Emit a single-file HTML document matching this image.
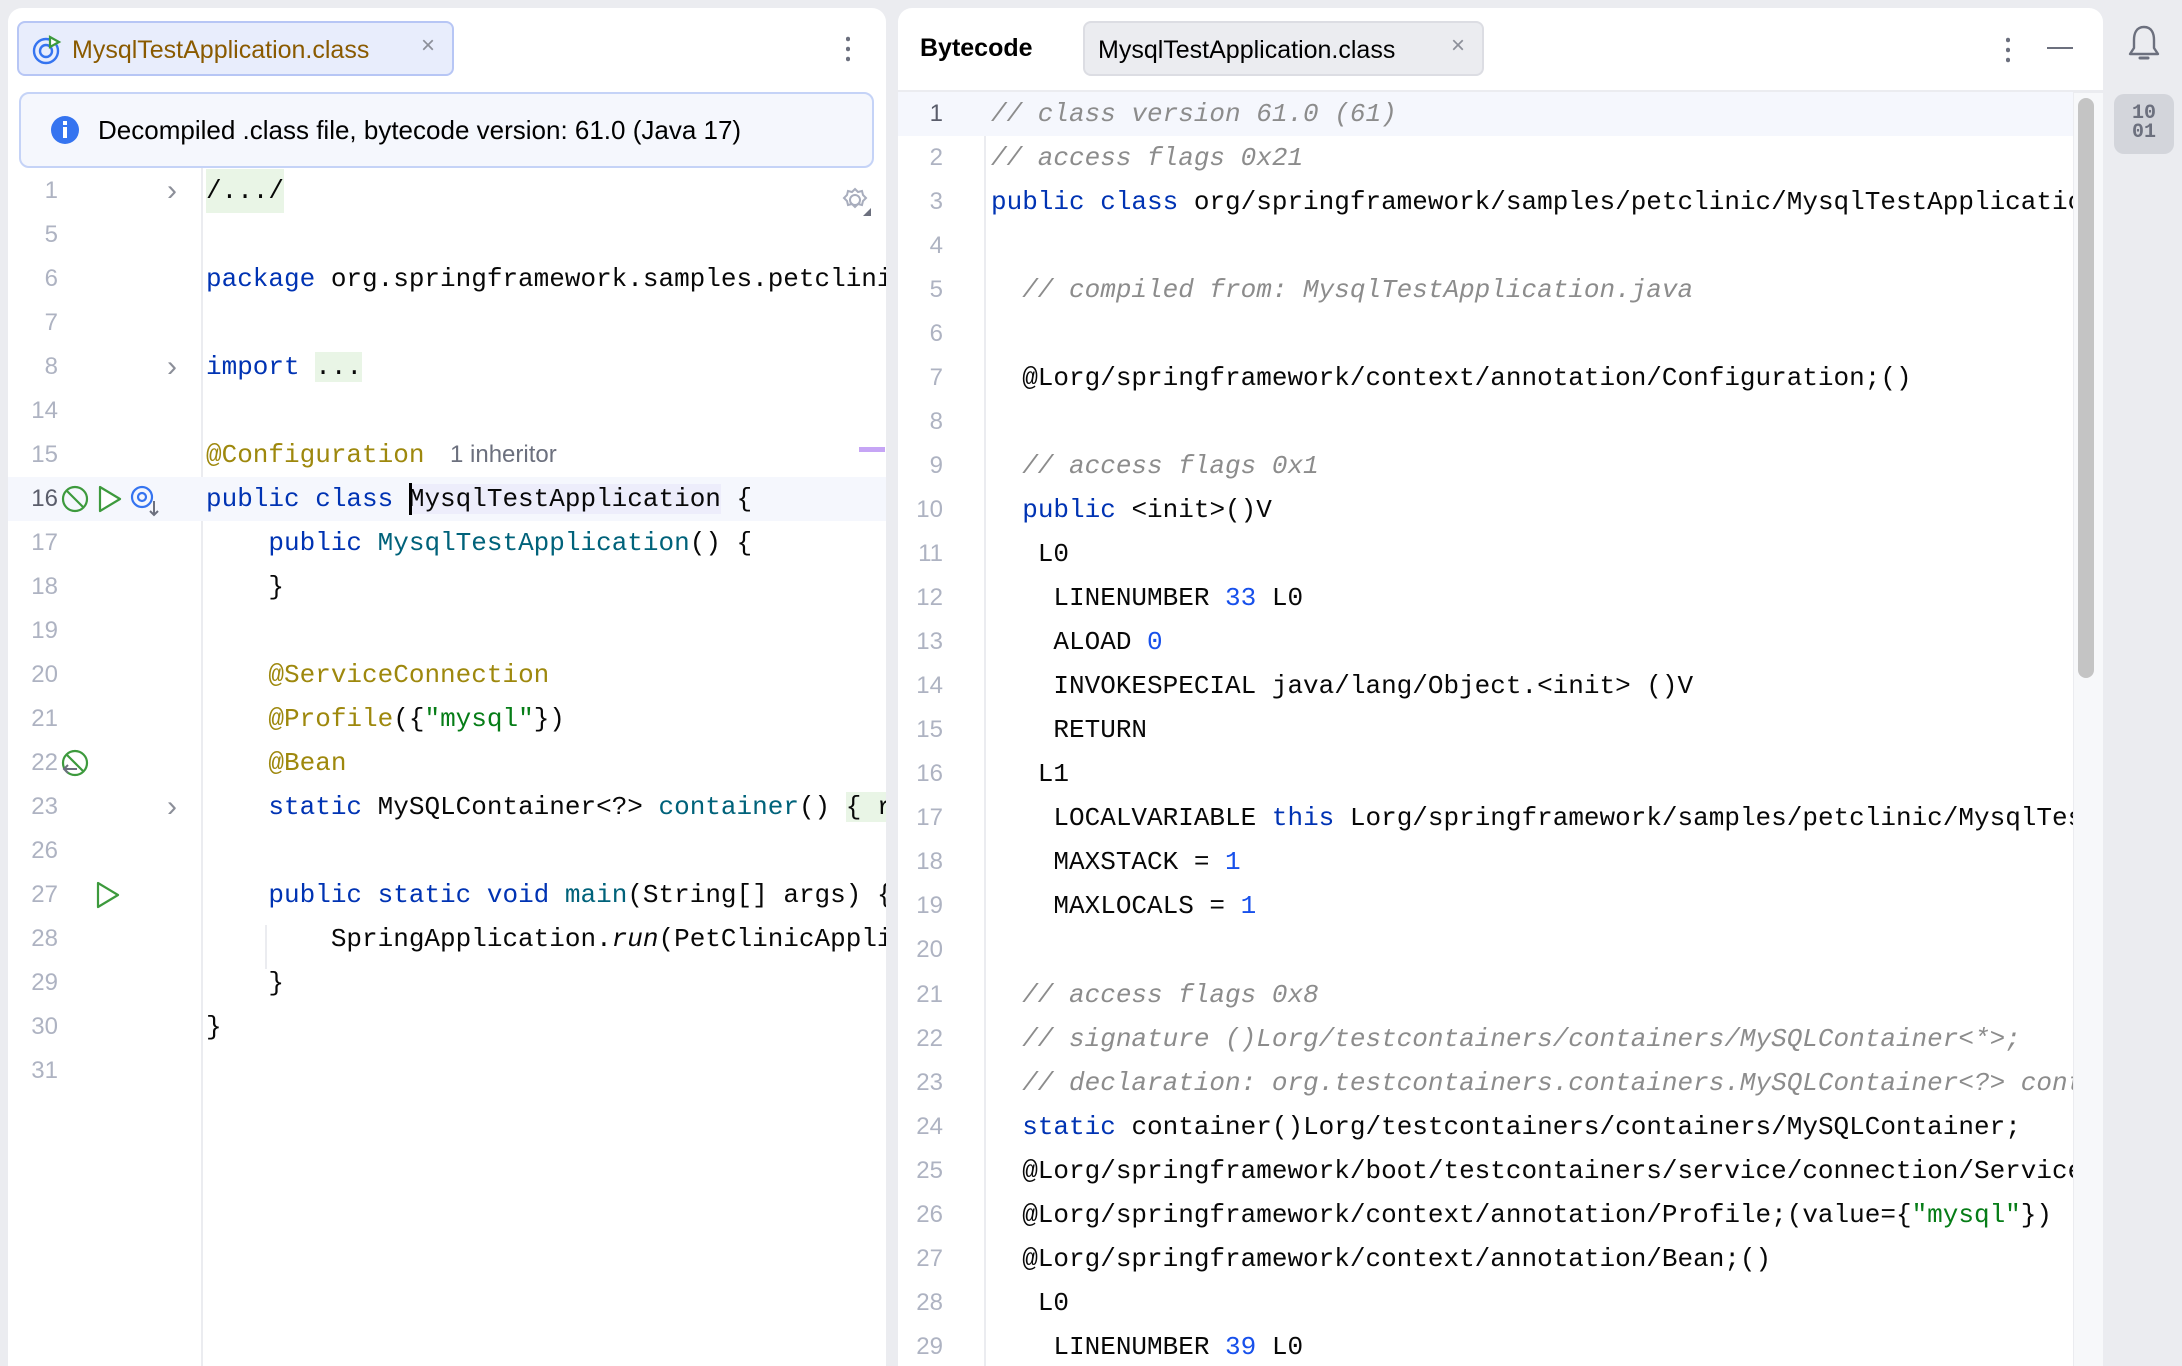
<!DOCTYPE html>
<html><head><meta charset="utf-8"><style>
*{margin:0;padding:0;box-sizing:border-box}
body{width:2182px;height:1366px;background:#ebecf0;position:relative;overflow:hidden;font-family:"Liberation Sans",sans-serif}
.panel{position:absolute;background:#fff;border-radius:14px 14px 0 0;overflow:hidden}
.mono{font-family:"Liberation Mono",monospace;font-size:26px;white-space:pre;color:#080808}
.row{position:absolute;left:0;right:0;height:44px;line-height:44px}
.row>*{position:absolute;top:0}
.ln{text-align:right;color:#aeb3c2;font-family:"Liberation Sans",sans-serif;font-size:24px}
.k{color:#0033b3}.a{color:#9e880d}.s{color:#067d17}.c{color:#8c8c8c;font-style:italic}.n{color:#1750eb}.m{color:#00627a}
.fold{background:#e9f5e6}
.chev{left:159px;color:#8c8f99;font-family:"Liberation Sans",sans-serif;font-size:30px}
</style></head><body>

<!-- LEFT PANEL -->
<div class="panel" style="left:8px;top:8px;width:878px;height:1358px">
  <div style="position:absolute;left:9px;top:13px;width:437px;height:55px;background:#e8edfc;border:2px solid #b7c6f5;border-radius:8px"></div>
  <svg style="position:absolute;left:23px;top:26px" width="32" height="32" viewBox="0 0 32 32"><circle cx="15" cy="17" r="12" fill="none" stroke="#3574f0" stroke-width="2.4"/><circle cx="15" cy="17" r="6" fill="none" stroke="#3574f0" stroke-width="2.4"/><path d="M19 3 L28 8 L19 13 Z" fill="#fff" stroke="#3d9a3d" stroke-width="2.2"/></svg>
  <div style="position:absolute;left:64px;top:26px;font-size:25px;color:#8a5a00;line-height:32px">MysqlTestApplication.class</div>
  <div style="position:absolute;left:413px;top:24px;font-size:24px;color:#8c8f99">×</div>
  <div style="position:absolute;left:838px;top:26px;width:4px;height:28px;background:radial-gradient(circle,#6c707e 2px,transparent 2.5px) 0 0/4px 10px"></div>

  <div style="position:absolute;left:11px;top:84px;width:855px;height:76px;background:#f5f7fd;border:2px solid #c5d3f7;border-radius:10px"></div>
  <svg style="position:absolute;left:42px;top:107px" width="30" height="30" viewBox="0 0 30 30"><circle cx="15" cy="15" r="14" fill="#3574f0"/><rect x="13" y="12" width="4" height="11" fill="#fff"/><rect x="13" y="6" width="4" height="4" fill="#fff"/></svg>
  <div style="position:absolute;left:90px;top:106px;font-size:26px;color:#000;line-height:32px">Decompiled .class file, bytecode version: 61.0 (Java 17)</div>

  <div style="position:absolute;left:193px;top:160px;width:2px;height:1300px;background:#ebecf0"></div>
  <svg style="position:absolute;left:833px;top:178px" width="30" height="30" viewBox="0 0 30 30"><circle cx="14" cy="14" r="5" fill="none" stroke="#a8adbd" stroke-width="2"/><path d="M14 3 l3 3 l4 -1 l1 4 l3 3 l-3 3 l-1 4 l-4 -1 l-3 3 l-3 -3 l-4 1 l-1 -4 l-3 -3 l3 -3 l1 -4 l4 1 z" fill="none" stroke="#a8adbd" stroke-width="2"/><path d="M30 22 L30 30 L22 30Z" fill="#6c707e"/></svg>
  <div style="position:absolute;left:851px;top:439px;width:26px;height:5px;background:#c6a5f5"></div>
  <div style="position:absolute;left:257px;top:917px;width:2px;height:44px;background:#ebecf0"></div>
</div>

<div class="mono" style="position:absolute;left:8px;top:169px;width:878px;height:1197px;overflow:hidden">
 <div class="row" style="top:0"><span class="ln" style="right:828px">1</span><span class="chev">›</span><span class="fold" style="left:198px">/.../</span></div>
 <div class="row" style="top:44px"><span class="ln" style="right:828px">5</span></div>
 <div class="row" style="top:88px"><span class="ln" style="right:828px">6</span><span style="left:198px"><span class="k">package</span> org.springframework.samples.petclinic;</span></div>
 <div class="row" style="top:132px"><span class="ln" style="right:828px">7</span></div>
 <div class="row" style="top:176px"><span class="ln" style="right:828px">8</span><span class="chev">›</span><span style="left:198px"><span class="k">import</span> <span class="fold">...</span></span></div>
 <div class="row" style="top:220px"><span class="ln" style="right:828px">14</span></div>
 <div class="row" style="top:264px"><span class="ln" style="right:828px">15</span><span style="left:198px"><span class="a">@Configuration</span></span><span style="left:442px;font-family:'Liberation Sans',sans-serif;font-size:24px;color:#6c707e">1 inheritor</span></div>
 <div class="row" style="top:308px;background:#f5f7fd"><span class="ln" style="right:828px;color:#5a5d6b">16</span><svg style="left:53px;top:8px" width="28" height="28" viewBox="0 0 28 28"><circle cx="14" cy="14" r="12" fill="none" stroke="#3d9a3d" stroke-width="2.2"/><path d="M6 6 L22 22" stroke="#3d9a3d" stroke-width="2.2"/></svg><svg style="left:88px;top:8px" width="28" height="28" viewBox="0 0 28 28"><path d="M4 2 L24 14 L4 26 Z" fill="#fff" stroke="#3d9a3d" stroke-width="2.2" stroke-linejoin="round"/></svg><svg style="left:122px;top:8px" width="32" height="34" viewBox="0 0 32 34"><circle cx="12" cy="12" r="10" fill="none" stroke="#3574f0" stroke-width="2.2"/><circle cx="12" cy="12" r="4" fill="none" stroke="#3574f0" stroke-width="2.2"/><path d="M24 16 V30 M20 26 L24 30 L28 26" fill="none" stroke="#6c707e" stroke-width="2"/></svg><span style="left:198px"><span class="k">public class</span> <span style="background:#ededfb">MysqlTestApplication</span> {</span><span style="left:401px;top:6px;width:3px;height:32px;background:#000"></span></div>
 <div class="row" style="top:352px"><span class="ln" style="right:828px">17</span><span style="left:198px">    <span class="k">public</span> <span class="m">MysqlTestApplication</span>() {</span></div>
 <div class="row" style="top:396px"><span class="ln" style="right:828px">18</span><span style="left:198px">    }</span></div>
 <div class="row" style="top:440px"><span class="ln" style="right:828px">19</span></div>
 <div class="row" style="top:484px"><span class="ln" style="right:828px">20</span><span style="left:198px">    <span class="a">@ServiceConnection</span></span></div>
 <div class="row" style="top:528px"><span class="ln" style="right:828px">21</span><span style="left:198px">    <span class="a">@Profile</span>({<span class="s">"mysql"</span>})</span></div>
 <div class="row" style="top:572px"><span class="ln" style="right:828px">22</span><svg style="left:53px;top:8px" width="30" height="30" viewBox="0 0 30 30"><circle cx="14" cy="14" r="12" fill="none" stroke="#3d9a3d" stroke-width="2.2"/><path d="M6 6 L22 22" stroke="#3d9a3d" stroke-width="2.2"/><path d="M16 20 H3 M7 16 L3 20 L7 24" fill="none" stroke="#6c707e" stroke-width="2"/></svg><span style="left:198px">    <span class="a">@Bean</span></span></div>
 <div class="row" style="top:616px"><span class="ln" style="right:828px">23</span><span class="chev">›</span><span style="left:198px">    <span class="k">static</span> MySQLContainer&lt;?&gt; <span class="m">container</span>() <span class="fold">{ r</span></span></div>
 <div class="row" style="top:660px"><span class="ln" style="right:828px">26</span></div>
 <div class="row" style="top:704px"><span class="ln" style="right:828px">27</span><svg style="left:86px;top:8px" width="28" height="28" viewBox="0 0 28 28"><path d="M4 2 L24 14 L4 26 Z" fill="#fff" stroke="#3d9a3d" stroke-width="2.2" stroke-linejoin="round"/></svg><span style="left:198px">    <span class="k">public static void</span> <span class="m">main</span>(String[] args) {</span></div>
 <div class="row" style="top:748px"><span class="ln" style="right:828px">28</span><span style="left:198px">        SpringApplication.<i>run</i>(PetClinicApplication.class)</span></div>
 <div class="row" style="top:792px"><span class="ln" style="right:828px">29</span><span style="left:198px">    }</span></div>
 <div class="row" style="top:836px"><span class="ln" style="right:828px">30</span><span style="left:198px">}</span></div>
 <div class="row" style="top:880px"><span class="ln" style="right:828px">31</span></div>
</div>

<!-- RIGHT PANEL -->
<div class="panel" style="left:898px;top:8px;width:1205px;height:1358px">
  <div style="position:absolute;left:22px;top:24px;font-size:25px;font-weight:bold;color:#000;line-height:32px">Bytecode</div>
  <div style="position:absolute;left:185px;top:13px;width:401px;height:55px;background:#ebecf0;border:2px solid #dcdde3;border-radius:8px"></div>
  <div style="position:absolute;left:200px;top:26px;font-size:25px;color:#000;line-height:32px">MysqlTestApplication.class</div>
  <div style="position:absolute;left:553px;top:24px;font-size:24px;color:#8c8f99">×</div>
  <div style="position:absolute;left:1108px;top:27px;width:4px;height:28px;background:radial-gradient(circle,#6c707e 2px,transparent 2.5px) 0 0/4px 10px"></div>
  <div style="position:absolute;left:1149px;top:39px;width:26px;height:2px;background:#6c707e"></div>
  <div style="position:absolute;left:0;top:82px;width:1205px;height:3px;background:#ebecf0"></div>
  <div style="position:absolute;left:86px;top:85px;width:2px;height:1300px;background:#ebecf0"></div>
  <div style="position:absolute;left:1175px;top:85px;width:30px;height:1300px;background:#f7f8fa;border-left:1px solid #ebecf0"></div>
  <div style="position:absolute;left:1180px;top:90px;width:16px;height:580px;background:#c4c4c4;border-radius:8px"></div>
</div>

<div class="mono" style="position:absolute;left:898px;top:92px;width:1175px;height:1274px;overflow:hidden">
 <div class="row" style="top:0;background:#f5f7fd"><span class="ln" style="right:1130px;color:#5a5d6b">1</span><span style="left:93px" class="c">// class version 61.0 (61)</span></div>
 <div class="row" style="top:44px"><span class="ln" style="right:1130px">2</span><span style="left:93px" class="c">// access flags 0x21</span></div>
 <div class="row" style="top:88px"><span class="ln" style="right:1130px">3</span><span style="left:93px"><span class="k">public class</span> org/springframework/samples/petclinic/MysqlTestApplication</span></div>
 <div class="row" style="top:132px"><span class="ln" style="right:1130px">4</span></div>
 <div class="row" style="top:176px"><span class="ln" style="right:1130px">5</span><span style="left:93px" class="c">  // compiled from: MysqlTestApplication.java</span></div>
 <div class="row" style="top:220px"><span class="ln" style="right:1130px">6</span></div>
 <div class="row" style="top:264px"><span class="ln" style="right:1130px">7</span><span style="left:93px">  @Lorg/springframework/context/annotation/Configuration;()</span></div>
 <div class="row" style="top:308px"><span class="ln" style="right:1130px">8</span></div>
 <div class="row" style="top:352px"><span class="ln" style="right:1130px">9</span><span style="left:93px" class="c">  // access flags 0x1</span></div>
 <div class="row" style="top:396px"><span class="ln" style="right:1130px">10</span><span style="left:93px">  <span class="k">public</span> &lt;init&gt;()V</span></div>
 <div class="row" style="top:440px"><span class="ln" style="right:1130px">11</span><span style="left:93px">   L0</span></div>
 <div class="row" style="top:484px"><span class="ln" style="right:1130px">12</span><span style="left:93px">    LINENUMBER <span class="n">33</span> L0</span></div>
 <div class="row" style="top:528px"><span class="ln" style="right:1130px">13</span><span style="left:93px">    ALOAD <span class="n">0</span></span></div>
 <div class="row" style="top:572px"><span class="ln" style="right:1130px">14</span><span style="left:93px">    INVOKESPECIAL java/lang/Object.&lt;init&gt; ()V</span></div>
 <div class="row" style="top:616px"><span class="ln" style="right:1130px">15</span><span style="left:93px">    RETURN</span></div>
 <div class="row" style="top:660px"><span class="ln" style="right:1130px">16</span><span style="left:93px">   L1</span></div>
 <div class="row" style="top:704px"><span class="ln" style="right:1130px">17</span><span style="left:93px">    LOCALVARIABLE <span class="k">this</span> Lorg/springframework/samples/petclinic/MysqlTestApplication;</span></div>
 <div class="row" style="top:748px"><span class="ln" style="right:1130px">18</span><span style="left:93px">    MAXSTACK = <span class="n">1</span></span></div>
 <div class="row" style="top:792px"><span class="ln" style="right:1130px">19</span><span style="left:93px">    MAXLOCALS = <span class="n">1</span></span></div>
 <div class="row" style="top:836px"><span class="ln" style="right:1130px">20</span></div>
 <div class="row" style="top:881px"><span class="ln" style="right:1130px">21</span><span style="left:93px" class="c">  // access flags 0x8</span></div>
 <div class="row" style="top:925px"><span class="ln" style="right:1130px">22</span><span style="left:93px" class="c">  // signature ()Lorg/testcontainers/containers/MySQLContainer&lt;*&gt;;</span></div>
 <div class="row" style="top:969px"><span class="ln" style="right:1130px">23</span><span style="left:93px" class="c">  // declaration: org.testcontainers.containers.MySQLContainer&lt;?&gt; container()</span></div>
 <div class="row" style="top:1013px"><span class="ln" style="right:1130px">24</span><span style="left:93px">  <span class="k">static</span> container()Lorg/testcontainers/containers/MySQLContainer;</span></div>
 <div class="row" style="top:1057px"><span class="ln" style="right:1130px">25</span><span style="left:93px">  @Lorg/springframework/boot/testcontainers/service/connection/ServiceConnection;()</span></div>
 <div class="row" style="top:1101px"><span class="ln" style="right:1130px">26</span><span style="left:93px">  @Lorg/springframework/context/annotation/Profile;(value={<span class="s">"mysql"</span>})</span></div>
 <div class="row" style="top:1145px"><span class="ln" style="right:1130px">27</span><span style="left:93px">  @Lorg/springframework/context/annotation/Bean;()</span></div>
 <div class="row" style="top:1189px"><span class="ln" style="right:1130px">28</span><span style="left:93px">   L0</span></div>
 <div class="row" style="top:1233px"><span class="ln" style="right:1130px">29</span><span style="left:93px">    LINENUMBER <span class="n">39</span> L0</span></div>
</div>

<!-- right strip -->
<svg style="position:absolute;left:2126px;top:24px" width="36" height="40" viewBox="0 0 36 40"><path d="M18 3 C10 3 8 10 8 16 V24 L4 30 H32 L28 24 V16 C28 10 26 3 18 3 Z" fill="none" stroke="#6c707e" stroke-width="2.4" stroke-linejoin="round"/><path d="M14 34 H22" stroke="#6c707e" stroke-width="3" stroke-linecap="round"/></svg>
<div style="position:absolute;left:2114px;top:94px;width:60px;height:60px;background:#d3d5db;border-radius:10px;font-family:'Liberation Mono',monospace;font-weight:bold;font-size:20px;color:#6c707e;line-height:19px;text-align:center;padding-top:10px">10<br>01</div>
</body></html>
